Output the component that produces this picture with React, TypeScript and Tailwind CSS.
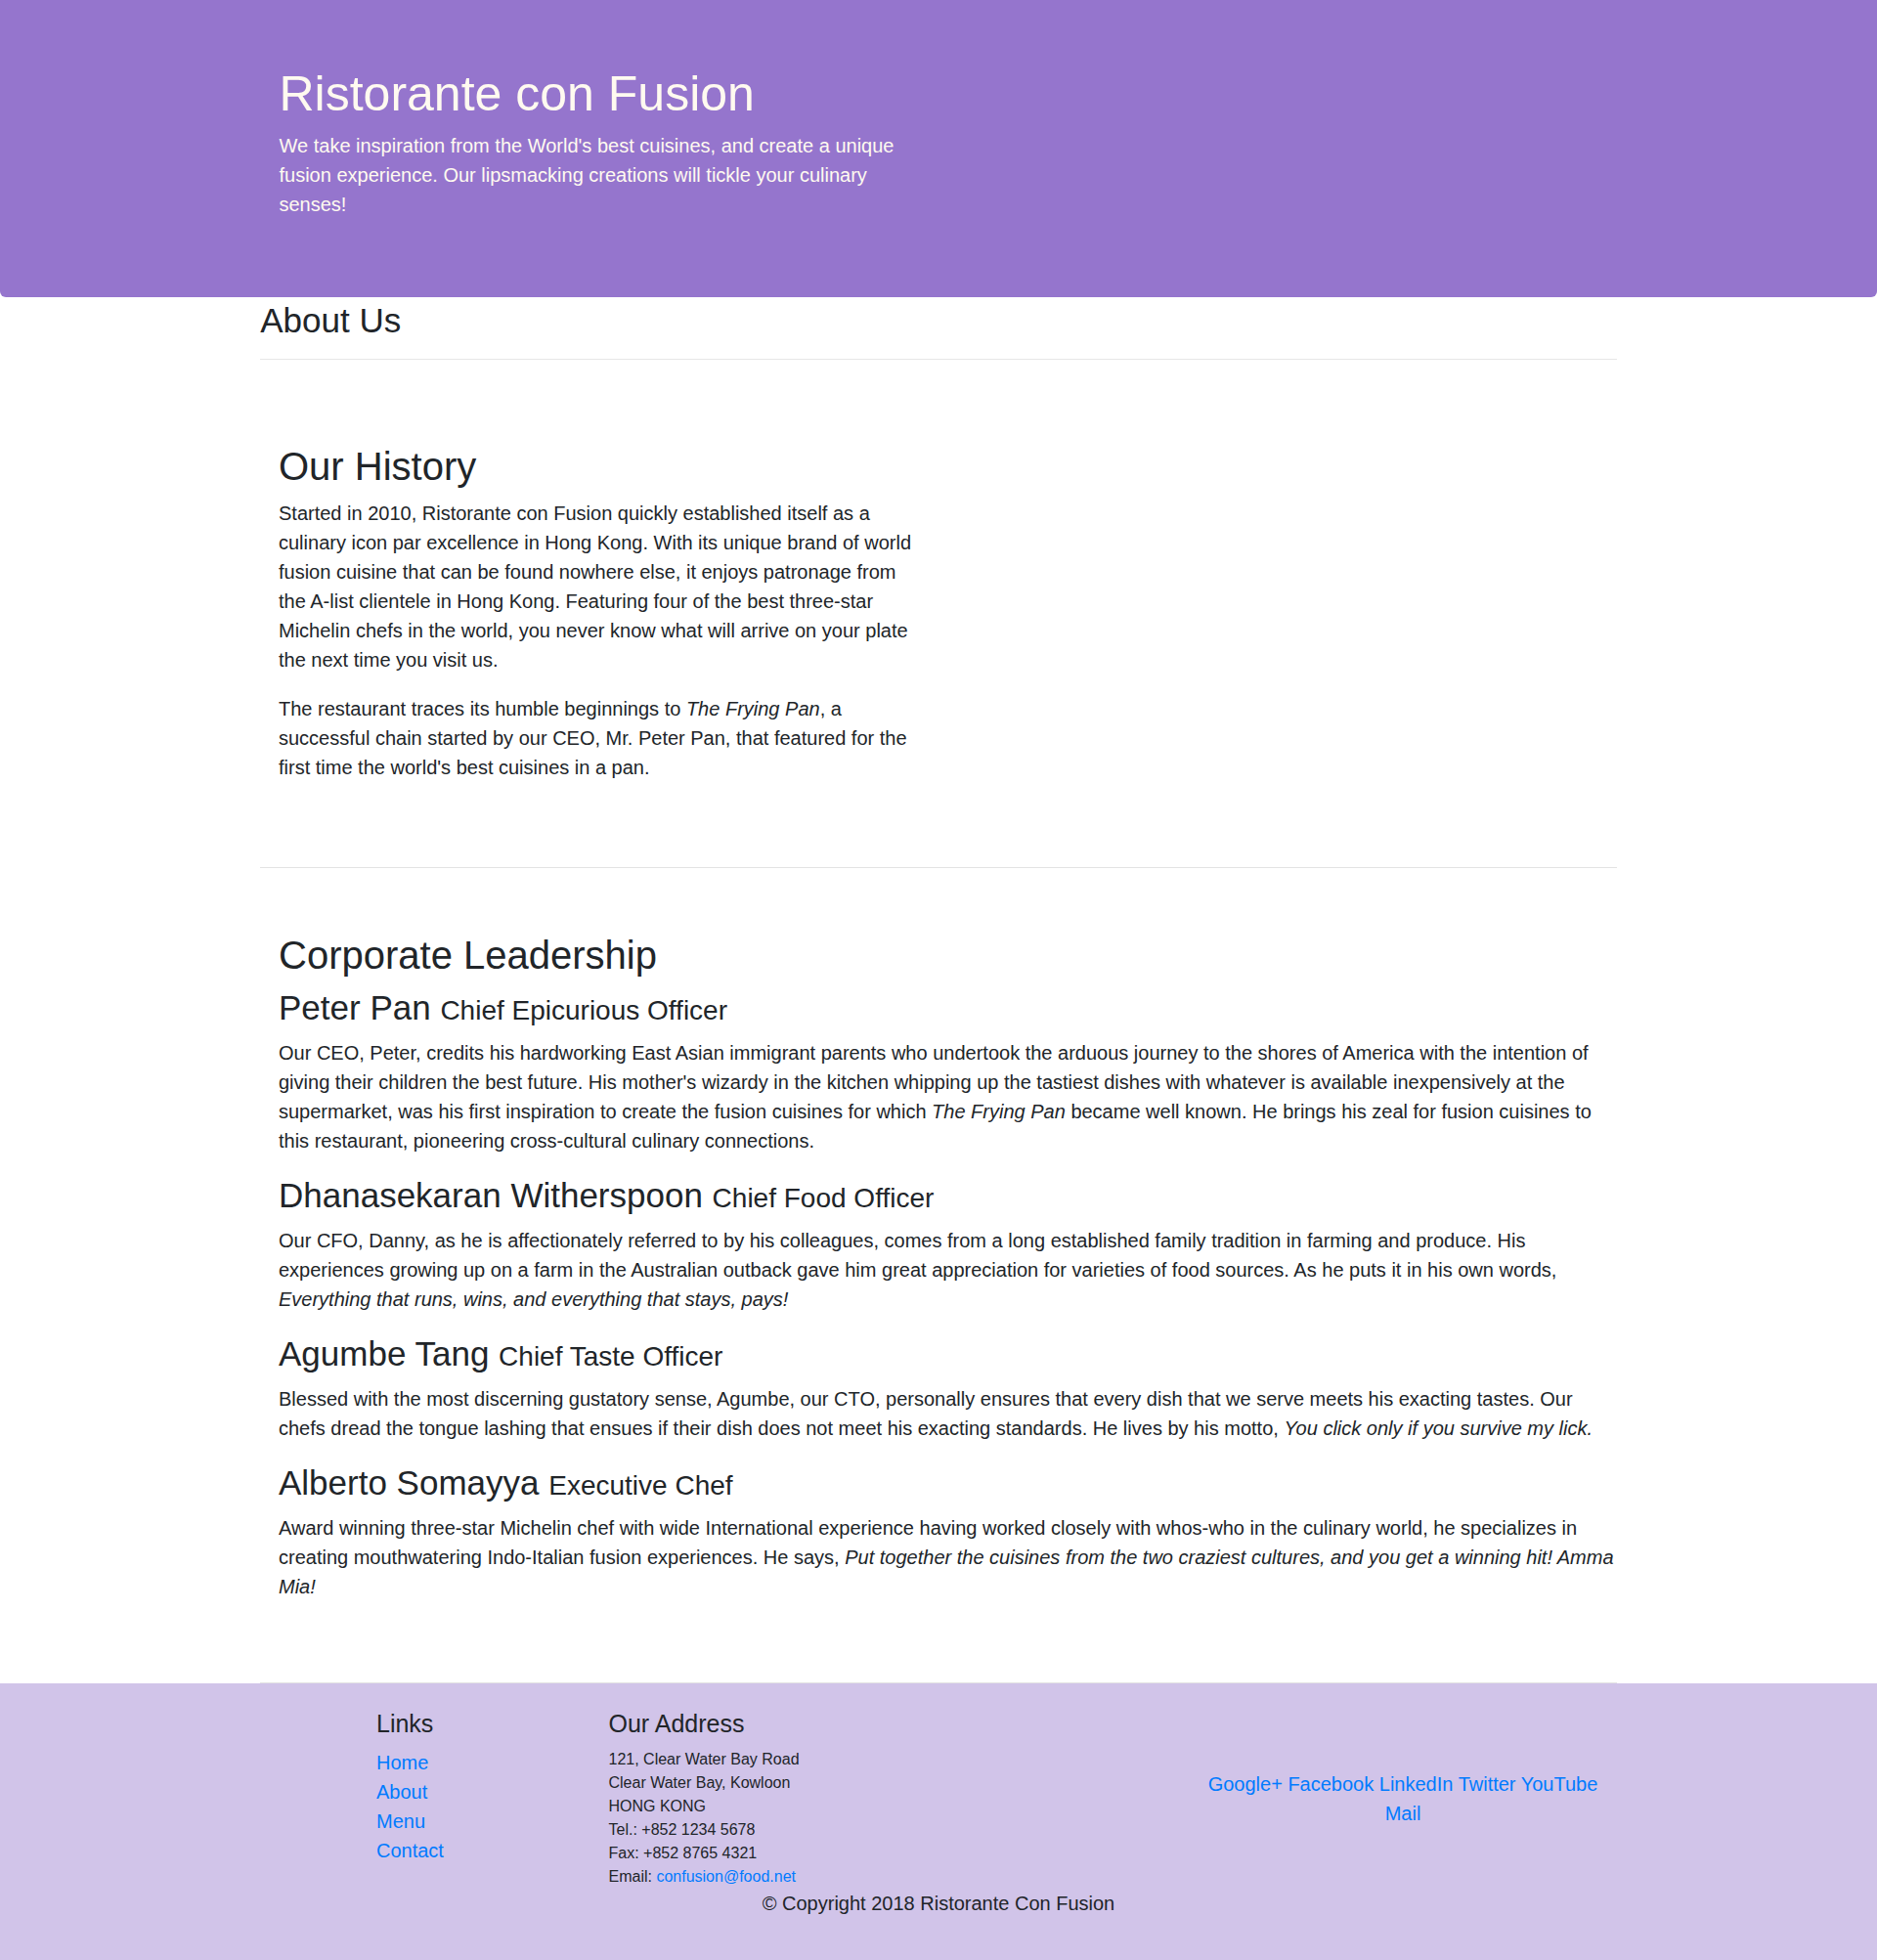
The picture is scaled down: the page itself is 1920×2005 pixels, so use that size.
import React from "react";

type Leader = {
  name: string;
  title: string;
  wide?: boolean;
  body: React.ReactNode;
};

const leaders: Leader[] = [
  {
    name: "Peter Pan",
    title: "Chief Epicurious Officer",
    body: (
      <>
        Our CEO, Peter, credits his hardworking East Asian immigrant parents who undertook the arduous journey
        to the shores of America with the intention of giving their children the best future. His mother's
        wizardy in the kitchen whipping up the tastiest dishes with whatever is available inexpensively at the
        supermarket, was his first inspiration to create the fusion cuisines for which <em>The Frying Pan</em>{" "}
        became well known. He brings his zeal for fusion cuisines to this restaurant, pioneering cross-cultural
        culinary connections.
      </>
    ),
  },
  {
    name: "Dhanasekaran Witherspoon",
    title: "Chief Food Officer",
    body: (
      <>
        Our CFO, Danny, as he is affectionately referred to by his colleagues, comes from a long established
        family tradition in farming and produce. His experiences growing up on a farm in the Australian outback
        gave him great appreciation for varieties of food sources. As he puts it in his own words,{" "}
        <em>Everything that runs, wins, and everything that stays, pays!</em>
      </>
    ),
  },
  {
    name: "Agumbe Tang",
    title: "Chief Taste Officer",
    body: (
      <>
        Blessed with the most discerning gustatory sense, Agumbe, our CTO, personally ensures that every dish
        that we serve meets his exacting tastes. Our chefs dread the tongue lashing that ensues if their dish
        does not meet his exacting standards. He lives by his motto, <em>You click only if you survive my lick.</em>
      </>
    ),
  },
  {
    name: "Alberto Somayya",
    title: "Executive Chef",
    wide: true,
    body: (
      <>
        Award winning three-star Michelin chef with wide International experience having worked closely with
        whos-who in the culinary world, he specializes in creating mouthwatering Indo-Italian fusion experiences.
        He says,{" "}
        <em>Put together the cuisines from the two craziest cultures, and you get a winning hit! Amma Mia!</em>
      </>
    ),
  },
];

const socials = ["Google+", "Facebook", "LinkedIn", "Twitter", "YouTube", "Mail"];

export default function App() {
  return (
    <div
      className="min-h-[2005px] bg-white text-[#212529] text-[20px] leading-[30px]"
      style={{ fontFamily: '"Liberation Sans", Arial, sans-serif' }}
    >
      {/* jumbotron */}
      <header className="h-[304px] bg-[#9575cd] rounded-b-[6px]">
        <div className="w-[1425px] mx-auto pt-[66px] pl-[38px]">
          <h1 className="text-[50px] leading-[60px] font-medium text-[#fffaf0] mb-[8px]">
            Ristorante con Fusion
          </h1>
          <p className="w-[656px] text-[#fffaf0]">
            We take inspiration from the World's best cuisines, and create a unique fusion experience. Our
            lipsmacking creations will tickle your culinary senses!
          </p>
        </div>
      </header>

      <main className="w-[1425px] mx-auto px-[18.75px]">
        <div className="pt-[3px]">
          <h3 className="text-[35px] leading-[42px] font-medium">About Us</h3>
          <hr className="mt-[18px] border-0 border-t border-[#e6e6e6]" />
        </div>

        <section className="min-h-[520px] border-b border-[#e3e3e3] pt-[85px] pb-[63px]">
          <div className="w-1/2 px-[18.75px]">
            <h2 className="text-[40px] leading-[48px] font-medium mb-[9px]">Our History</h2>
            <p className="mb-[20px]">
              Started in 2010, Ristorante con Fusion quickly established itself as a culinary icon par excellence
              in Hong Kong. With its unique brand of world fusion cuisine that can be found nowhere else, it
              enjoys patronage from the A-list clientele in Hong Kong. Featuring four of the best three-star
              Michelin chefs in the world, you never know what will arrive on your plate the next time you visit
              us.
            </p>
            <p className="mb-[20px]">
              The restaurant traces its humble beginnings to <em>The Frying Pan</em>, a successful chain started
              by our CEO, Mr. Peter Pan, that featured for the first time the world's best cuisines in a pan.
            </p>
          </div>
        </section>

        <section className="border-b border-[#e3e3e3] pt-[65px] pb-[63px]">
          <div className="px-[18.75px]">
            <h2 className="text-[40px] leading-[48px] font-medium mb-[9px]">Corporate Leadership</h2>
            {leaders.map((l) => (
              <div key={l.name}>
                <h3 className="text-[35px] leading-[42px] font-medium mb-[10px]">
                  {l.name} <small className="text-[28px] leading-none">{l.title}</small>
                </h3>
                <p className={l.wide ? "mb-[20px] mr-[-20px]" : "mb-[20px]"}>{l.body}</p>
              </div>
            ))}
          </div>
        </section>
      </main>

      <footer className="bg-[#d1c4e9] pt-[26px] pb-[24px]">
        <div className="w-[1425px] mx-auto">
          <div className="grid grid-cols-12">
            <div className="col-start-2 col-span-2 px-[18.75px]">
              <h5 className="text-[25px] leading-[30px] font-medium mb-[10px]">Links</h5>
              <ul className="mb-[20px]">
                {["Home", "About", "Menu", "Contact"].map((x) => (
                  <li key={x}>
                    <a href="#" className="text-[#007bff]">
                      {x}
                    </a>
                  </li>
                ))}
              </ul>
            </div>
            <div className="col-span-5 px-[18.75px]">
              <h5 className="text-[25px] leading-[30px] font-medium mb-[10px]">Our Address</h5>
              <address className="not-italic text-[16px] leading-[24px]">
                121, Clear Water Bay Road
                <br />
                Clear Water Bay, Kowloon
                <br />
                HONG KONG
                <br />
                Tel.: +852 1234 5678
                <br />
                Fax: +852 8765 4321
                <br />
                Email:{" "}
                <a href="#" className="text-[#007bff]">
                  confusion@food.net
                </a>
              </address>
            </div>
            <div className="col-span-4 px-[18.75px] self-center text-center">
              {socials.map((s, i) => (
                <React.Fragment key={s}>
                  <a href="#" className="text-[#007bff]">
                    {s}
                  </a>
                  {i < socials.length - 1 ? " " : null}
                </React.Fragment>
              ))}
            </div>
          </div>
          <div className="flex justify-center">
            <p className="mb-[20px] px-[18.75px]">© Copyright 2018 Ristorante Con Fusion</p>
          </div>
        </div>
      </footer>
    </div>
  );
}
